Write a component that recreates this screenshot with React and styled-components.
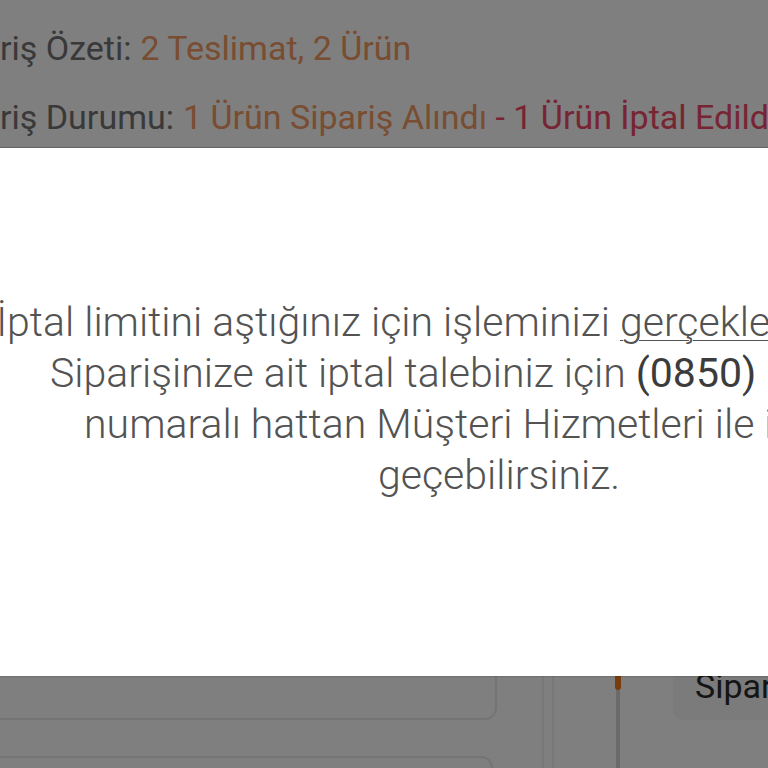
import React from 'react'
import styled, { createGlobalStyle } from 'styled-components'

const GlobalStyle = createGlobalStyle`
    html, body {
        margin: 0;
        padding: 0;
        background: #ffffff;
    }
    body {
        font-family: Roboto, "Noto Sans", "Liberation Sans", sans-serif;
    }
`

const App = () => {

    return (
        <Viewport>
            <GlobalStyle />
            <Page>
                <Summary>
                    <SummaryRow>
                        <Label>Sipariş Özeti:</Label>
                        <Value>2 Teslimat, 2 Ürün</Value>
                    </SummaryRow>
                    <SummaryRow>
                        <Label>Sipariş Durumu:</Label>
                        <Value>1 Ürün Sipariş Alındı</Value>
                        <Value tone="red">&nbsp;- 1 Ürün İptal Edildi</Value>
                    </SummaryRow>
                </Summary>
                <Details>
                    <ItemCard />
                    <Rail />
                    <Timeline>
                        <TimelineDot />
                    </Timeline>
                    <StepBox>Sipariş Alındı</StepBox>
                    <ItemCard second />
                </Details>
            </Page>
            <Overlay />
            <Modal role="dialog">
                <Message>
                    İptal limitini aştığınız için işleminizi <u>gerçekleştiremiyoruz.</u><br />
                    Siparişinize ait iptal talebiniz için <strong>(0850) 252 40 00</strong><br />
                    numaralı hattan Müşteri Hizmetleri ile iletişime<br />
                    geçebilirsiniz.
                </Message>
            </Modal>
        </Viewport>
    )

}

export default App

const Viewport = styled.div`
    position: relative;
    width: 768px;
    height: 768px;
    overflow: hidden;
    background: #ffffff;
`

const Page = styled.div`
    margin-left: -66px;
    width: 1300px;
`

const Summary = styled.div`
    display: flex;
    flex-direction: column;
    gap: 33px;
    padding: 30px 0 0;
    height: 148px;
    box-sizing: border-box;
    border-bottom: 1px solid #e6e6e6;
`

const SummaryRow = styled.p`
    display: flex;
    align-items: baseline;
    margin: 0;
    font-size: 34px;
    line-height: 36px;
    white-space: nowrap;
`

const Label = styled.span`
    color: #727272;
    margin-right: 9px;
`

const Value = styled.span`
    color: ${props => props.tone === 'red' ? '#ee4a66' : '#f09a62'};
`

const Details = styled.div`
    display: grid;
    grid-template-columns: 563px 90px 62px 24px 400px;
    grid-template-rows: 130px 36px 40px;
    margin-top: 442px;
`

const ItemCard = styled.div`
    grid-column: 1;
    grid-row: ${props => props.second ? 3 : 1};
    border: 2px solid #e8e8e8;
    border-left: none;
    border-radius: 0 0 12px 0;
    ${props => props.second && `
        border-radius: 0 12px 0 0;
        border-bottom: none;
        margin-right: 4px;
    `}
`

const Rail = styled.div`
    grid-column: 2;
    grid-row: 1 / 4;
    margin-left: 45px;
    width: 8px;
    border-left: 2px solid #f0f0f0;
    border-right: 2px solid #f0f0f0;
`

const Timeline = styled.div`
    grid-column: 3;
    grid-row: 1 / 4;
    display: flex;
    justify-content: center;
    position: relative;
    &::before {
        content: "";
        width: 4px;
        height: 100%;
        background: #d6d6d6;
    }
`

const TimelineDot = styled.span`
    position: absolute;
    top: 84px;
    left: 50%;
    transform: translateX(-50%);
    width: 6px;
    height: 16px;
    border-radius: 3px;
    background: #f27a1a;
`

const StepBox = styled.div`
    grid-column: 5;
    grid-row: 1;
    align-self: end;
    height: 80px;
    box-sizing: border-box;
    padding: 28px 22px 0;
    background: #f6f6f6;
    border-radius: 10px 0 0 10px;
    color: #2a2a2a;
    font-size: 34px;
    line-height: 36px;
    white-space: nowrap;
`

const Overlay = styled.div`
    position: absolute;
    inset: 0;
    background: rgba(0, 0, 0, 0.5);
`

const Modal = styled.div`
    position: absolute;
    top: 148px;
    left: 0;
    width: 998px;
    height: 528px;
    display: flex;
    align-items: center;
    justify-content: center;
    padding-bottom: 26px;
    box-sizing: border-box;
    background: #ffffff;
    box-shadow: 0 0 2px rgba(0, 0, 0, 0.35);
`

const Message = styled.p`
    margin: 0;
    text-align: center;
    font-size: 41px;
    font-weight: 300;
    line-height: 51px;
    color: #535353;
    white-space: nowrap;
    u {
        text-decoration-thickness: 1px;
        text-underline-offset: 4px;
    }
    strong {
        font-weight: 400;
        color: #3c3c3c;
    }
`
